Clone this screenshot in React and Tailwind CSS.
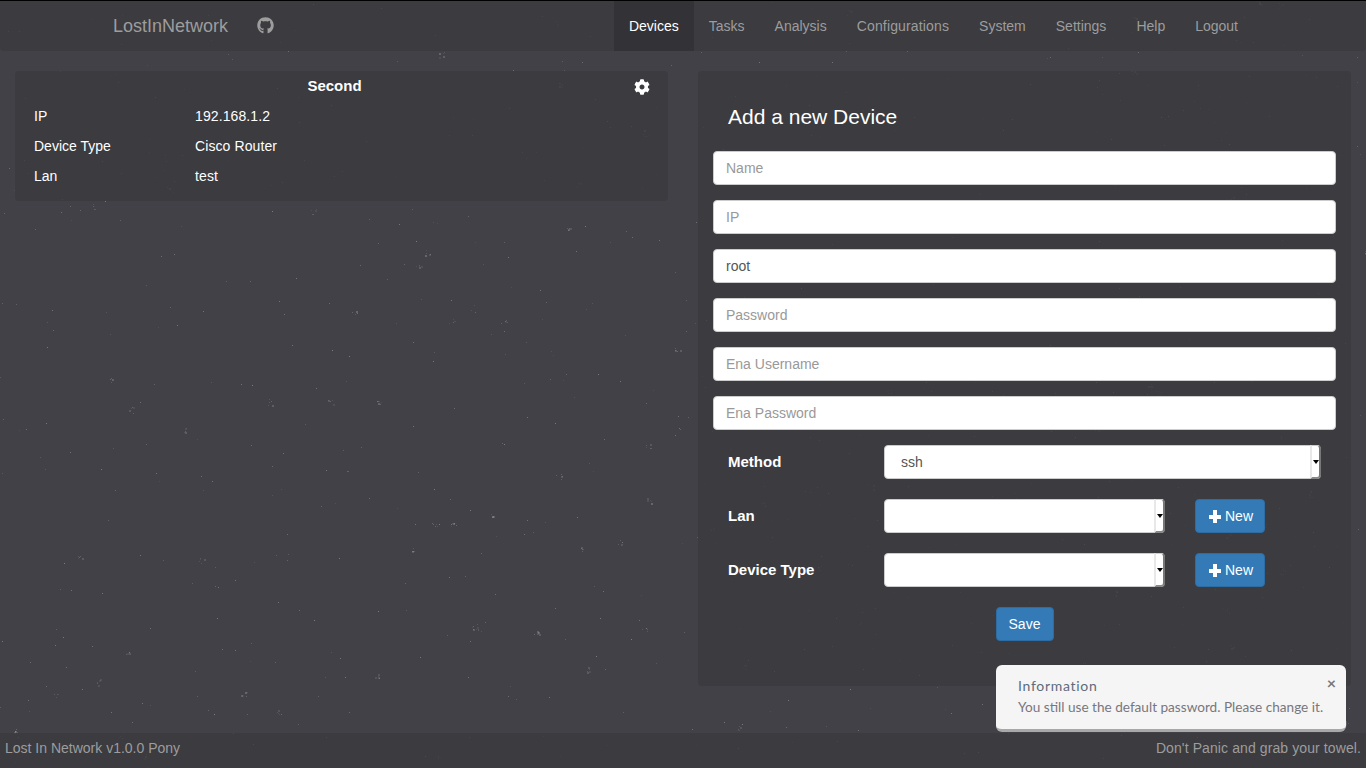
import React from 'react';
import { FaCog, FaGithub } from 'react-icons/fa';

const NAV_ITEMS = ['Devices', 'Tasks', 'Analysis', 'Configurations', 'System', 'Settings', 'Help', 'Logout'];
const DEVICE_FIELDS = [
  { label: 'IP', value: '192.168.1.2' },
  { label: 'Device Type', value: 'Cisco Router' },
  { label: 'Lan', value: 'test' },
];
const INPUTS = [
  { placeholder: 'Name' },
  { placeholder: 'IP' },
  { placeholder: 'Username', value: 'root' },
  { placeholder: 'Password' },
  { placeholder: 'Ena Username' },
  { placeholder: 'Ena Password' },
];

// fixed pseudo random speckle, same on every render
const SPECKS = (() => {
  let seed = 7;
  const next = () => {
    seed = (seed * 16807) % 2147483647;
    return seed / 2147483647;
  };
  const dots = Array.from({ length: 800 }, () => ({
    x: Math.floor(next() * 1366),
    y: Math.floor(next() * 768),
    s: 1,
    o: 0.06 + next() * 0.25,
  }));
  // small smudges of a few grey dots
  for (let i = 0; i < 90; i++) {
    const cx = next() * 1366;
    const cy = next() * 768;
    for (let j = 0; j < 5; j++) {
      dots.push({
        x: Math.floor(cx + next() * 6),
        y: Math.floor(cy + next() * 6),
        s: next() > 0.7 ? 2 : 1,
        o: 0.06 + next() * 0.14,
      });
    }
  }
  return dots;
})();

const Speckle = () => (
  <svg className="absolute inset-0 pointer-events-none" width="1366" height="768" aria-hidden="true">
    {SPECKS.map((d, i) => (
      <rect key={i} x={d.x} y={d.y} width={d.s} height={d.s} fill="#ffffff" opacity={d.o} />
    ))}
  </svg>
);

const PlusIcon = () => (
  <svg width="12" height="13" viewBox="0 0 12 13" fill="#ffffff" aria-hidden="true">
    <rect x="4" y="0" width="4" height="13" />
    <rect x="0" y="5" width="12" height="4" />
  </svg>
);

const Select = ({ className, value }) => (
  <div className={`relative h-[34px] ${className}`}>
    <select
      defaultValue={value}
      className="block w-full h-full appearance-none bg-white rounded border border-[#ccc] pl-4 pr-3 text-sm text-[#555] outline-none"
    >
      <option>{value}</option>
    </select>
    <div className="absolute right-0 top-0 bottom-0 w-[11px] flex items-center justify-center bg-white border-l-2 border-[#e8e8e8] border-r-2 border-r-[#777] border-b-2 border-b-[#888] border-t border-t-[#ccc] rounded-r">
      <span className="shrink-0 w-0 h-0 border-x-[3.5px] border-x-transparent border-t-[4px] border-t-black" />
    </div>
  </div>
);

const NewButton = () => (
  <button className="ml-[30px] w-[70px] h-[34px] flex items-center justify-start gap-[4px] pl-[13px] rounded bg-[#337ab7] border border-[#2e6da4] text-sm text-white">
    <PlusIcon />
    New
  </button>
);

const App = () => {
  return (
    <div className="relative w-[1366px] h-[768px] overflow-hidden flex flex-col bg-[#424147] text-sm text-white font-['Liberation_Sans',Arial,sans-serif]">
      <Speckle />

      <nav className="relative h-[51px] shrink-0 flex items-stretch border-t border-black bg-[#3a393e]/75 rounded-b pl-[113px] pr-[113px]">
        <a className="text-lg text-[#9d9d9d] leading-[50px]">LostInNetwork</a>
        <FaGithub className="ml-[29px] mt-[16px] text-[#9d9d9d]" size={17} />
        <ul className="ml-auto flex">
          {NAV_ITEMS.map((item, i) => (
            <li
              key={item}
              className={`px-[15px] leading-[50px] ${i === 0 ? 'bg-[#333237] text-white' : 'text-[#9d9d9d]'} ${item === 'Configurations' ? 'tracking-[0.15px]' : ''}`}
            >
              {item}
            </li>
          ))}
        </ul>
      </nav>

      <main className="relative flex-1 flex items-start gap-[30px] px-[15px] pt-5">
        <section className="relative w-[653px] h-[130px] rounded bg-[#3a393e]/75 pl-[19px] pr-4">
          <h4 className="pt-[6px] pr-[17px] h-[30px] text-center text-[15px] leading-[17px] font-bold">Second</h4>
          <FaCog className="absolute right-[18px] top-[8px]" size={16} />
          {DEVICE_FIELDS.map((field) => (
            <div key={field.label} className="flex h-[30px] items-center">
              <span className="w-[161px]">{field.label}</span>
              <span className="tracking-[0.1px]">{field.value}</span>
            </div>
          ))}
        </section>

        <section className="w-[653px] h-[615px] rounded bg-[#3a393e]/75 px-[15px]">
          <h3 className="pl-[15px] pt-[33px] h-[80px] text-[21px] leading-[26px]">Add a new Device</h3>
          {INPUTS.map((input) => (
            <input
              key={input.placeholder}
              type="text"
              placeholder={input.placeholder}
              defaultValue={input.value}
              className="block w-[623px] h-[34px] mb-[15px] px-3 rounded bg-white border border-[#ccc] text-sm text-[#555] placeholder:text-[#999] outline-none"
            />
          ))}

          <div className="flex items-center h-[34px] mb-5 pl-[15px]">
            <label className="w-[156px] text-[15px] font-bold">Method</label>
            <Select className="w-[437px]" value="ssh" />
          </div>
          <div className="flex items-center h-[34px] mb-5 pl-[15px]">
            <label className="w-[156px] text-[15px] font-bold">Lan</label>
            <Select className="w-[281px]" value="" />
            <NewButton />
          </div>
          <div className="flex items-center h-[34px] mb-5 pl-[15px]">
            <label className="w-[156px] text-[15px] font-bold">Device Type</label>
            <Select className="w-[281px]" value="" />
            <NewButton />
          </div>
          <div className="flex justify-center">
            <button className="w-[58px] h-[34px] rounded bg-[#337ab7] border border-[#2e6da4] text-sm text-white">Save</button>
          </div>
        </section>
      </main>

      <footer className="relative h-[35px] shrink-0 flex items-start justify-between px-[5px] pt-[5px] bg-[#3a393e]/75 text-[#9d9d9d]">
        <span>Lost In Network v1.0.0 Pony</span>
        <span className="tracking-[0.1px]">Don't Panic and grab your towel.</span>
      </footer>

      <div className="absolute left-[996px] top-[665px] w-[350px] h-[67px] rounded-md bg-[#f5f5f5] border-b-[3px] border-[#a8a8a8] pl-[22px] pt-[12px] font-['Lato',sans-serif]">
        <p className="text-sm leading-[18px] text-[#5d6b7a] tracking-[0.7px]">Information</p>
        <p className="mt-[3px] text-[13.6px] leading-[18px] text-[#77777d]">You still use the default password. Please change it.</p>
        <span className="absolute right-[10px] top-[8px] text-base leading-[20px] font-bold text-[#777]">×</span>
      </div>
    </div>
  );
};

export default App;
